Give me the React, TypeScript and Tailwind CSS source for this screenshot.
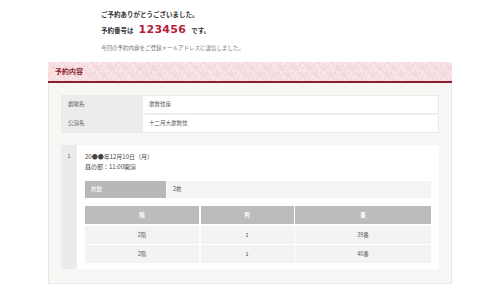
import React from 'react';

const FONT = "font-['Noto_Sans_CJK_JP','Noto_Sans',sans-serif]";

const INFO = [
  { label: '劇場名', value: '歌舞伎座' },
  { label: '公演名', value: '十二月大歌舞伎' },
];

const SEATS = [
  { floor: '2階', row: '1', num: '39番' },
  { floor: '2階', row: '1', num: '40番' },
];

// sayagata-ish texture for the panel header
const HeaderPattern = () => (
  <svg className="absolute inset-0 w-full h-full" aria-hidden>
    <defs>
      <pattern id="saya" width="10" height="10" patternUnits="userSpaceOnUse" patternTransform="rotate(45)">
        <path
          d="M0 2.5h7.5v5M2.5 0v5h7.5M5 10V7.5H0M10 2.5H7.5"
          fill="none"
          stroke="#fbecee"
          strokeWidth="1"
        />
      </pattern>
    </defs>
    <rect width="100%" height="100%" fill="#f4d8dc" />
    <rect width="100%" height="100%" fill="url(#saya)" />
  </svg>
);

export default function App() {
  return (
    <div className={`w-[500px] h-[291px] bg-white overflow-hidden text-[#333] ${FONT}`}>
      {/* Thanks message */}
      <div className="pl-[101px] pt-[9px]">
        <p className="text-[6.5px] font-bold leading-[10px]">ご予約ありがとうございました。</p>
        <p className="mt-[5px] flex items-center text-[6.5px] font-bold leading-[12px]">
          予約番号は
          <span className="mx-[5px] text-[11px] text-[#b3203a] font-['DejaVu_Sans',sans-serif] tracking-[0.3px]">123456</span>
          です。
        </p>
        <p className="mt-[8px] text-[5.5px] leading-[8px] text-[#777]">
          今回の予約内容をご登録メールアドレスに送信しました。
        </p>
      </div>

      {/* Panel */}
      <div className="ml-[48px] mt-[10px] w-[404px]">
        <div className="relative h-[21px] rounded-tr-[4px] overflow-hidden border-b-2 border-[#8c1d2e]">
          <HeaderPattern />
          <span className="relative block pl-[7px] pt-[4px] text-[7px] font-bold leading-[10px] text-[#8c1d2e]">
            予約内容
          </span>
        </div>

        <div className="h-[201px] bg-[#f8f7f5] border border-t-0 border-[#ebe9e6] px-[12px] pt-[12px]">
          {/* Info table */}
          <div className="flex flex-col gap-[2px] border border-[#eceae7] bg-[#f0eeeb]">
            {INFO.map(r => (
              <div key={r.label} className="flex h-[17px] text-[5.5px] leading-[17px]">
                <div className="w-[81px] bg-[#ececec] pl-[6px] text-[#555]">{r.label}</div>
                <div className="flex-1 bg-white pl-[6px] text-[#555]">{r.value}</div>
              </div>
            ))}
          </div>

          {/* Reservation item */}
          <div className="mt-[12px] flex h-[124px] bg-white">
            <div className="w-[16px] bg-[#ebebeb] pt-[7px] text-center text-[5.5px] leading-[8px] text-[#555]">1</div>
            <div className="flex-1 px-[8px] pt-[7px]">
              <p className="text-[6px] leading-[10px] text-[#444]">20●●年12月10日（月）</p>
              <p className="text-[6px] leading-[10px] text-[#444]">昼の部：11:00開演</p>

              <div className="mt-[9px] flex h-[17px] text-[5.5px] leading-[17px]">
                <div className="w-[81px] bg-[#b8b8b8] pl-[6px] text-white">枚数</div>
                <div className="ml-px flex-1 bg-[#f4f4f4] pl-[6px] text-[#555]">2枚</div>
              </div>

              <div className="mt-[8px] grid grid-cols-[114px_93px_1fr] gap-[1.5px] text-[5.5px] text-center">
                {['階', '列', '番'].map(h => (
                  <div key={h} className="h-[18px] leading-[18px] bg-[#bcbcbc] text-white font-bold">{h}</div>
                ))}
                {SEATS.map((s, i) => (
                  <React.Fragment key={i}>
                    <div className="h-[18px] leading-[18px] bg-[#f3f3f3] text-[#555]">{s.floor}</div>
                    <div className="h-[18px] leading-[18px] bg-[#f3f3f3] text-[#555]">{s.row}</div>
                    <div className="h-[18px] leading-[18px] bg-[#f3f3f3] text-[#555]">{s.num}</div>
                  </React.Fragment>
                ))}
              </div>
            </div>
          </div>
        </div>
      </div>
    </div>
  );
}
